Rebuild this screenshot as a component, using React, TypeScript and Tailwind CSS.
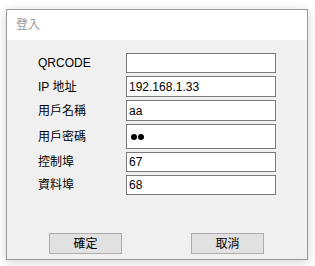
const fields = [
  { label: 'QRCODE', value: '', h: 'h-[20px]' },
  { label: 'IP 地址', value: '192.168.1.33', h: 'h-[21px]' },
  { label: '用戶名稱', value: 'aa', h: 'h-[21px]' },
  { label: '用戶密碼', value: '', h: 'h-[25px]', password: true },
  { label: '控制埠', value: '67', h: 'h-[20px]' },
  { label: '資料埠', value: '68', h: 'h-[20px]' },
];

export default function App() {
  return (
    <div className="w-[315px] h-[266px] bg-white pt-[9px] pl-[6px] font-['Liberation_Sans','Noto_Sans_CJK_TC',sans-serif]">
      {/* Dialog window */}
      <div className="w-[302px] h-[251px] border border-[#9a9a9a] bg-[#f0f0f0] flex flex-col shadow-[0_2px_10px_rgba(0,0,0,0.18)]">
        {/* Title bar */}
        <div className="h-[30px] bg-white flex items-center pl-[9px] text-[12px] text-[#9b9b9b]">
          登入
        </div>

        {/* Form */}
        <div className="flex flex-col gap-[3px] pt-[13px] pl-[31px]">
          {fields.map((f) => (
            <div key={f.label} className={`flex items-center ${f.h}`}>
              <div className="w-[88px] text-[12px] text-black">{f.label}</div>
              <div className={`w-[150px] ${f.h} border border-[#7a7a7a] bg-white flex items-center pl-[2px] text-[12px] text-black`}>
                {f.password ? (
                  <div className="flex gap-[1px] pl-[2px]">
                    <span className="w-[6px] h-[6px] rounded-full bg-black" />
                    <span className="w-[6px] h-[6px] rounded-full bg-black" />
                  </div>
                ) : (
                  f.value
                )}
              </div>
            </div>
          ))}
        </div>

        {/* Buttons */}
        <div className="flex mt-auto mb-[5px] pl-[42px] gap-[69px]">
          <button className="w-[73px] h-[21px] bg-[#e1e1e1] border border-[#adadad] text-[12px] text-black">確定</button>
          <button className="w-[73px] h-[21px] bg-[#e1e1e1] border border-[#adadad] text-[12px] text-black">取消</button>
        </div>
      </div>
    </div>
  );
}
